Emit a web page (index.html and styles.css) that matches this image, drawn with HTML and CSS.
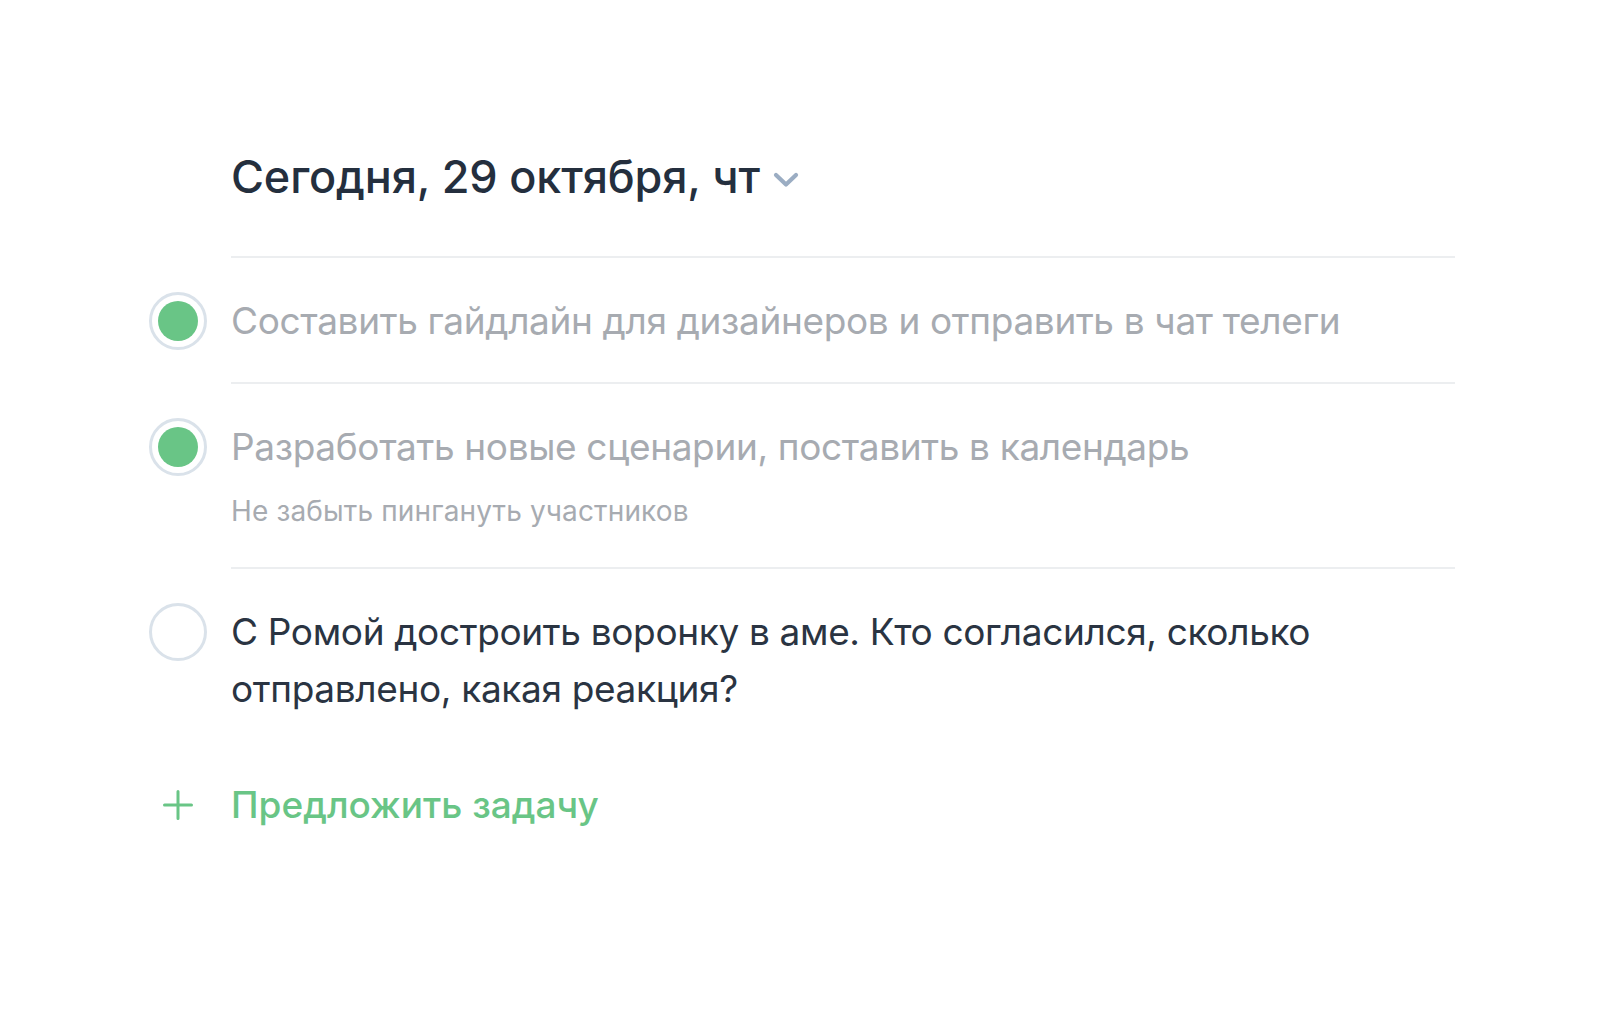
FILE: index.html
```html
<!DOCTYPE html>
<html lang="ru">
<head>
<meta charset="utf-8">
<title>Сегодня</title>
<link rel="stylesheet" href="styles.css">
</head>
<body>
<main class="day">
  <header class="day-head">
    <h1 class="day-title">Сегодня, 29 октября, чт</h1>
    <svg class="chevron" width="26" height="16" viewBox="0 0 26 16" aria-hidden="true"><path d="M3 3 L13 12.5 L23 3" fill="none" stroke="#9badc3" stroke-width="4.2" stroke-linecap="round" stroke-linejoin="round"/></svg>
  </header>
  <ul class="tasks">
    <li class="task done">
      <span class="check"><span class="dot"></span></span>
      <div class="task-body">
        <div class="task-title">Составить гайдлайн для дизайнеров и отправить в чат телеги</div>
      </div>
    </li>
    <li class="task done">
      <span class="check"><span class="dot"></span></span>
      <div class="task-body">
        <div class="task-title">Разработать новые сценарии, поставить в календарь</div>
        <div class="task-note">Не забыть пингануть участников</div>
      </div>
    </li>
    <li class="task last">
      <span class="check"></span>
      <div class="task-body">
        <div class="task-title">С Ромой достроить воронку в аме. Кто согласился, сколько отправлено, какая реакция?</div>
      </div>
    </li>
  </ul>
  <div class="add-task">
    <svg class="plus" width="30" height="30" viewBox="0 0 30 30" aria-hidden="true"><path d="M15 1.5 V28.5 M1.5 15 H28.5" stroke="#69c586" stroke-width="3" stroke-linecap="round"/></svg>
    <span class="add-label">Предложить задачу</span>
  </div>
</main>
</body>
</html>
```
FILE: styles.css
```css
* { box-sizing: border-box; }
html, body { margin: 0; padding: 0; background: #ffffff; }
body {
  font-family: Inter, "Noto Sans", sans-serif;
  -webkit-font-smoothing: antialiased;
}
.day {
  width: 1306px;
  margin-left: 149px;
  padding-top: 145px;
}
.day-head {
  display: flex;
  align-items: center;
  gap: 13px;
  margin-left: 82px;
  padding-bottom: 47px;
  border-bottom: 2px solid #eceef0;
}
.day-title {
  margin: 0;
  font-size: 45px;
  line-height: 64px;
  font-weight: 500;
  color: #242f3e;
  letter-spacing: -0.15px;
}
.chevron { margin-top: 6px; }
.tasks { list-style: none; margin: 0; padding: 0; }
.task {
  display: grid;
  grid-template-columns: 58px 1fr;
  column-gap: 24px;
  align-items: start;
}
.check {
  width: 58px;
  height: 58px;
  margin-top: 34px;
  border: 3.5px solid #dae2ea;
  border-radius: 50%;
  display: flex;
  align-items: center;
  justify-content: center;
}
.dot {
  width: 40px;
  height: 40px;
  border-radius: 50%;
  background: #69c586;
}
.task-body {
  padding: 34px 0 33px;
  border-bottom: 2px solid #eceef0;
}
.task.last .task-body { border-bottom: none; padding-bottom: 0; }
.task-title {
  font-size: 37px;
  line-height: 57px;
  color: #2a3442;
  letter-spacing: -0.35px;
}
.task.done .task-title { color: #a7abb1; }
.task-note {
  margin-top: 19px;
  font-size: 28px;
  line-height: 34px;
  color: #a7abb1;
  letter-spacing: 0.15px;
  padding-bottom: 6px;
}
.add-task {
  display: grid;
  grid-template-columns: 58px 1fr;
  column-gap: 24px;
  align-items: center;
  margin-top: 60px;
}
.plus { justify-self: center; }
.add-label {
  font-size: 37px;
  line-height: 56px;
  font-weight: 500;
  color: #69c586;
}
```
